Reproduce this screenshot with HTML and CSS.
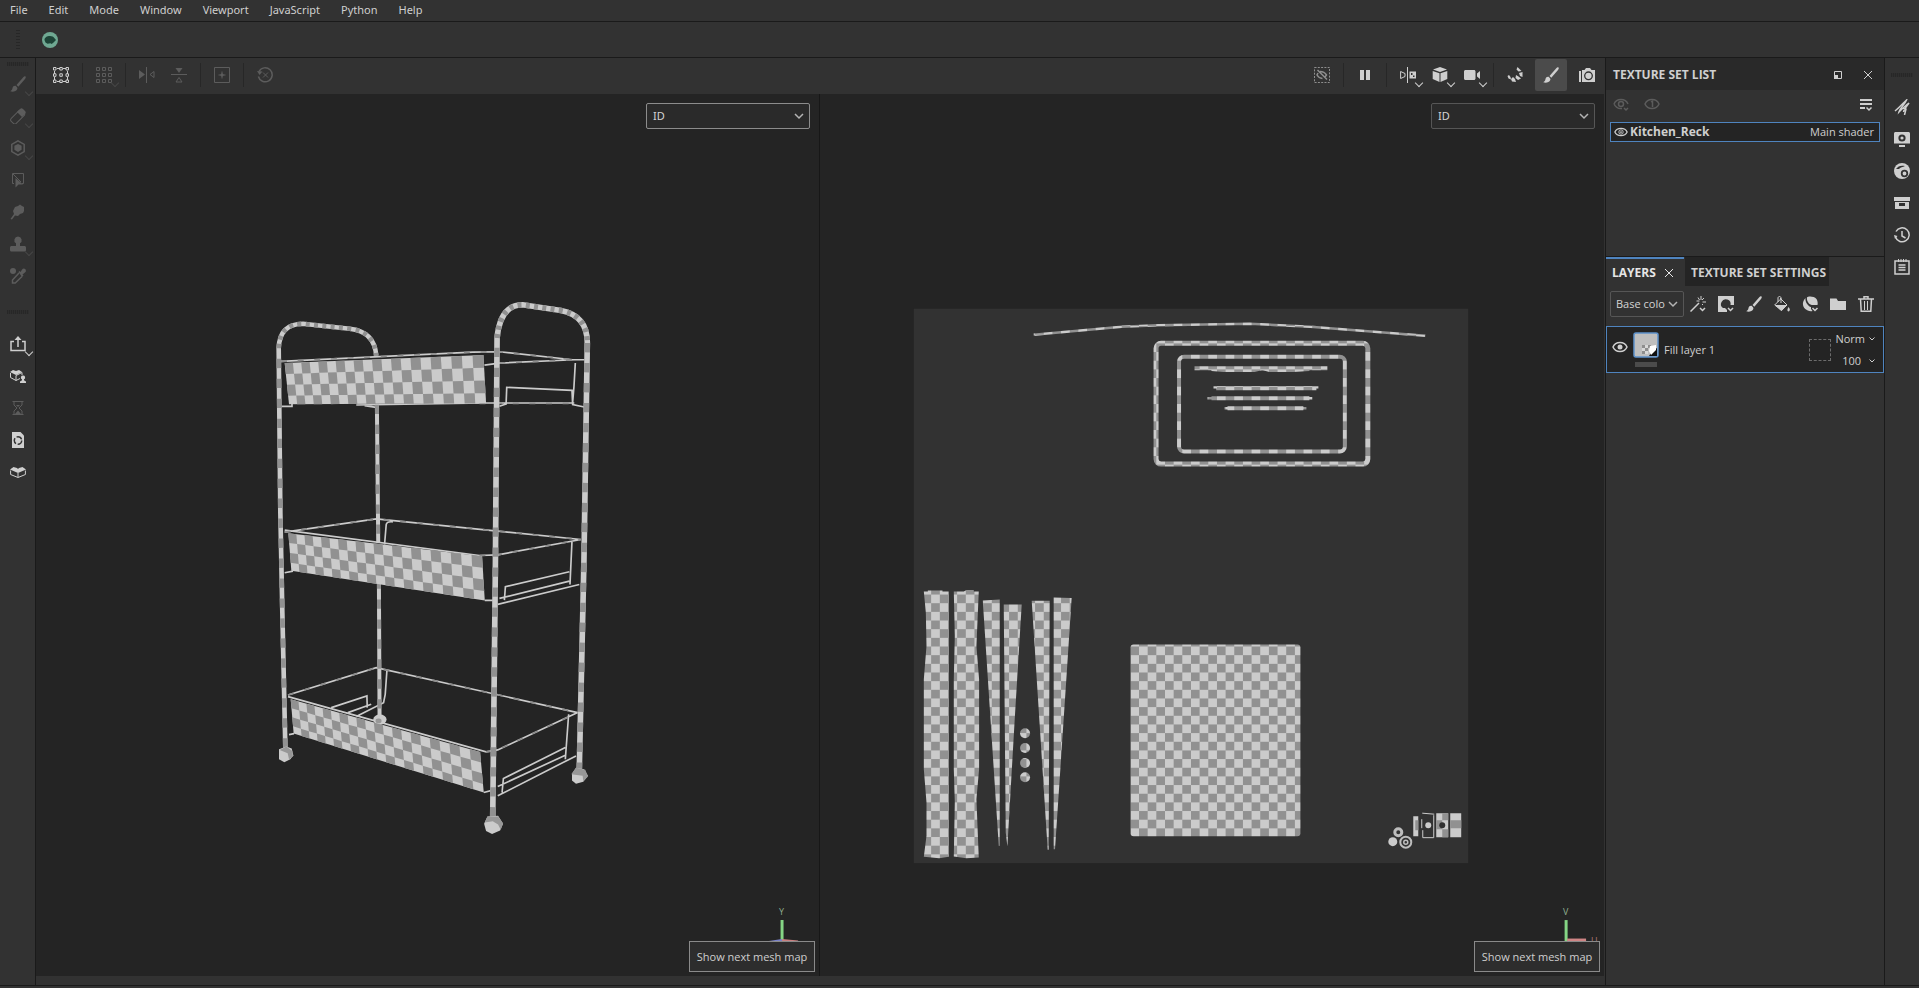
FILE: index.html
```html
<!DOCTYPE html>
<html lang="en">
<head>
  <meta charset="utf-8">
  <title>Painter</title>
  <link rel="stylesheet" href="styles.css">
</head>
<body>
  <nav class="menubar">
    <button>File</button>
    <button>Edit</button>
    <button>Mode</button>
    <button>Window</button>
    <button>Viewport</button>
    <button>JavaScript</button>
    <button>Python</button>
    <button>Help</button>
  </nav>

  <div class="plugin-bar">
    <span class="grip-v"></span>
    <button class="plugin" aria-label="Plugin">
      <svg viewBox="0 0 16 16"><circle cx="8" cy="8" r="8" fill="#6fa892"/><path d="M2.500 8C2.500 5.500 5 4 8 4c2 0 3.500.7 4.500 2.300L14 8l-1.500 1.500L11 11l-1.500 1-1-.8-3 .6L3.500 10.500z" fill="#1d4437"/></svg>
    </button>
  </div>

  <div class="workspace">
    <aside class="tools">
      <span class="grip-h"></span>
      <button class="icon dim more" aria-label="Paint">
        <svg viewBox="0 0 16 16"><path class="f" d="M15.500.5c-.8-.6-1.400-.2-2 .5L6.500 9l1.800 1.800L15 3c.8-1 1-1.900.5-2.500zM5.600 9.800C3.500 9.500 2.600 11 2.400 12.500 2.200 14 1 14.800.3 15.300c2.500.8 6 .2 7-2.300.3-1-.2-1.600-.5-2z"/></svg>
      </button>
      <button class="icon dim more" aria-label="Eraser">
        <svg viewBox="0 0 16 16"><rect class="s" x="-.5" y="5" width="15" height="7" rx="2" transform="rotate(-45 8 8)"/><path class="f" d="M7 4l3-3c1-1 2-1 3 0l2 2c1 1 1 2 0 3l-3 3z"/></svg>
      </button>
      <button class="icon dim more" aria-label="Projection">
        <svg viewBox="0 0 16 16"><path class="s2" d="M8 .8l6.200 3.600v7.200L8 15.200l-6.200-3.600V4.400z"/><path class="f" d="M8 4l3.600 1.800v4L8 12l-3.600-2.200v-4z"/></svg>
      </button>
      <button class="icon dim" aria-label="Polygon fill">
        <svg viewBox="0 0 16 16"><path class="s" d="M4 11.500H2.500v-10h11v10H12M3 2l8 8"/><path class="f" d="M5.500 6v9.500l3-3H13z"/></svg>
      </button>
      <button class="icon dim" aria-label="Smudge">
        <svg viewBox="0 0 16 16"><path class="f" d="M5 3l3-1 2-1.500L12 2l2 1v4l-1 2-3 1-2 2-3-.5L2 15.500.5 15 4 10 3 7z"/></svg>
      </button>
      <button class="icon dim more" aria-label="Clone">
        <svg viewBox="0 0 16 16"><path class="f" d="M8 .5a3.700 3.700 0 0 1 2 6.800V10h4.500c.8 0 1.500.7 1.500 1.500V14c0 .8-.5 1.500-1.500 1.500h-13C.5 15.500 0 14.800 0 14v-2.500C0 10.700.7 10 1.500 10H6V7.300A3.700 3.700 0 0 1 8 .5z"/></svg>
      </button>
      <button class="icon dim" aria-label="Material picker">
        <svg viewBox="0 0 16 16"><circle class="f" cx="3" cy="3" r="3"/><path class="f" d="M8.500 4l1-1 1 1 2-3c1.500-1.500 4.500.5 3 3l-3 2.500 1 1-1.500 1.500z"/><path class="s2" d="M9 5L2.500 12v3h2.700L12 8.500"/></svg>
      </button>
      <span class="grip-h lower"></span>
      <button class="icon more" aria-label="Export">
        <svg viewBox="0 0 16 16"><path class="s2" d="M4 5.500H1v9h14v-9h-3M8 11V3"/><path class="f" d="M8 0l3.500 4h-7z"/></svg>
      </button>
      <button class="icon" aria-label="Asset user">
        <svg viewBox="0 0 16 16"><path class="f" d="M0 4l3-2 3 1 3-1 3 2-6 3z"/><path class="s" d="M.5 5v4.500L6 12.500l4-2M6 7.500v5M6 7.500l6-3V7"/><path class="f" d="M13 7.500a2 2 0 0 1 1 3.800l.2 1.200 1.800 1V15h-6v-1.500l1.800-1 .2-1.200a2 2 0 0 1 1-3.800z"/></svg>
      </button>
      <button class="icon dim" aria-label="Pending">
        <svg viewBox="0 0 16 16"><path class="s" d="M2.500 1.500h11M2.500 14.500h11M4 2v3l3 3-3 3v3M12 2v3L9 8l3 3v3"/><path class="f" d="M6 5h4L8 7zM5 14l3-3.500 3 3.500z"/></svg>
      </button>
      <button class="icon" aria-label="Update resources">
        <svg viewBox="0 0 16 16"><path class="f" d="M2 0h8.500L14 3.500V16H2z"/><circle cx="8" cy="8.500" r="3.700" fill="none" stroke="#323232" stroke-width="1.500" stroke-dasharray="6 1.750"/></svg>
      </button>
      <button class="icon" aria-label="Assets">
        <svg viewBox="0 0 16 16"><path class="f" d="M0 5.500L3.500 3 7 4l1 1 1-1 3.500-1L16 5.500 8 9z"/><path class="s" d="M.6 6.500v4L8 13.500l7.400-3v-4M8 9v4"/></svg>
      </button>
    </aside>

    <main class="stage">
      <div class="viewbar">
        <button class="icon" aria-label="Transform">
          <svg viewBox="0 0 16 16"><path class="s" d="M1.500 4v3M1.500 10v3M14.500 4v3M14.500 10v3M4 1.500h3M10 1.500h3M4 14.500h3M10 14.500h3M.5.5h2.500v2.500H.5zM6.800.5h2.500v2.500H6.800zM13 .5h2.500v2.500H13zM.5 6.800h2.500v2.500H.5zM6.800 6.800h2.500v2.500H6.800zM13 6.800h2.500v2.500H13zM.5 13h2.500v2.500H.5zM6.800 13h2.500v2.500H6.800zM13 13h2.500v2.500H13z"/></svg>
        </button>
        <i class="sep"></i>
        <button class="icon dim more" aria-label="Tiling">
          <svg viewBox="0 0 16 16"><path class="s" d="M.5.5h3v3h-3zM6.500.5h3v3h-3zM12.500.5h3v3h-3zM.5 6.500h3v3h-3zM6.500 6.500h3v3h-3zM12.500 6.500h3v3h-3zM.5 12.500h3v3h-3zM6.500 12.500h3v3h-3zM12.500 12.500h3v3h-3z"/></svg>
        </button>
        <i class="sep"></i>
        <button class="icon dim" aria-label="Flip horizontally">
          <svg viewBox="0 0 16 16"><path class="f" d="M0 3l6 4.500L0 12z"/><path class="s" d="M7.500 0v16M15 4.500v6l-4-3z"/></svg>
        </button>
        <button class="icon dim" aria-label="Flip vertically">
          <svg viewBox="0 0 16 16"><path class="f" d="M4.500 1h7L8 6z"/><path class="s" d="M0 7.500h16M5 15h6l-3-4.500z"/></svg>
        </button>
        <i class="sep"></i>
        <button class="icon dim" aria-label="Center">
          <svg viewBox="0 0 16 16"><path class="s" d="M.5.5h15v15H.5zM8 4.500v7M4.500 8h7"/><path class="f" d="M8 6l2 2-2 2-2-2z"/></svg>
        </button>
        <i class="sep"></i>
        <button class="icon dim" aria-label="Reset">
          <svg viewBox="0 0 16 16"><path class="s2" d="M2 4.500a7 7 0 1 1-.6 5"/><path class="f" d="M0 4l5.500.5-3 3.500z"/><path class="s" d="M6 5.500l5 5M11 5.500l-5 5"/></svg>
        </button>

        <span class="spacer"></span>

        <button class="icon mid" aria-label="Hide selection">
          <svg viewBox="0 0 16 16"><rect class="s" x=".5" y=".5" width="15" height="15" stroke-dasharray="2 1.300"/><path class="s2" d="M3.500 3l9.500 9.500M6 4.500c3 0 5 1 6.500 3.500L11 10M4 6L3 8c1.200 2.200 3 3.300 5.500 3.500"/></svg>
        </button>
        <i class="sep"></i>
        <button class="icon" aria-label="Pause engine">
          <svg viewBox="0 0 16 16"><path class="f" d="M3 3h4v10H3zM9 3h4v10H9z"/></svg>
        </button>
        <i class="sep"></i>
        <button class="icon more" aria-label="Symmetry">
          <svg viewBox="0 0 16 16"><path class="s" d="M7.500 0v16M.6 4.500v7L5 9.500v-3z"/><path class="f" fill-rule="evenodd" d="M9.500 4.500H16v7H9.500zM11 6v2h1.500V6zM13 8.500V10h1.500V8.500z"/></svg>
        </button>
        <button class="icon more" aria-label="Perspective view">
          <svg viewBox="0 0 16 16"><path class="f" d="M8 0l7 2.500L8 5 1 2.500zM.7 4L7.500 6.300V15L.7 12zM15.300 4L8.500 6.300V15l6.800-3z"/></svg>
        </button>
        <button class="icon more" aria-label="Camera">
          <svg viewBox="0 0 16 16"><path class="f" d="M1.500 3H10c.8 0 1.500.7 1.500 1.500v7c0 .8-.7 1.500-1.500 1.500H1.500C.7 13 0 12.300 0 11.500v-7C0 3.700.7 3 1.500 3zM13 6.500L16 4v8l-3-2.500z"/></svg>
        </button>
        <i class="sep"></i>
        <div class="modes">
          <button class="icon" aria-label="Material layers">
            <svg viewBox="0 0 16 16"><path class="f" d="M10.500 0l4 4-3 .5-2-2zM12 6l3.500-1v5l-2.500-1zM9 8l2.500 1.500 2.500 2-3 1.500-2.500-2zM6 10l2 2 1 3-4-.5-1-2.500zM2 8l1.500 2 .5 2.500-2.500-1L.5 9z"/></svg>
          </button>
          <button class="icon active" aria-label="Paint mode">
            <svg viewBox="0 0 16 16"><path class="f" d="M15.500.5c-.8-.6-1.400-.2-2 .5L6.500 9l1.800 1.800L15 3c.8-1 1-1.900.5-2.500zM5.600 9.800C3.500 9.500 2.600 11 2.400 12.500 2.200 14 1 14.800.3 15.300c2.500.8 6 .2 7-2.300.3-1-.2-1.600-.5-2z"/></svg>
          </button>
          <button class="icon" aria-label="Render">
            <svg viewBox="0 0 16 16"><path class="f" d="M0 4h2v11H0zM3 3h2.500L7 1h4l1.500 2H16v12H3z"/><circle cx="9.500" cy="8.800" r="3.800" fill="none" stroke="#323232" stroke-width="1.300"/></svg>
          </button>
        </div>
      </div>

      <div class="viewports">
        <section class="viewport">
          <svg class="scene" viewBox="36 94 784 883">
            <g transform="translate(260 280) scale(.333333)">
              <g class="wire">
                <path d="M64 245L640 217L720 216L940 240H975M675 256L720 250L945 240M948 250L944 320L940 368M740 375L742 323L938 332L940 375L975 382M290 376L680 370L945 370M66 380H97V372M315 378L355 384M720 380L740 373"/>
                <path d="M75 758L350 718L965 780M75 752L660 828L715 826L965 780M375 795L380 735Q382 725 400 727M938 785L932 915M735 962L738 922L930 877M720 957L930 905M715 975L960 915M676 963H700M75 880L100 875"/>
                <path d="M85 1247L350 1165L955 1300M85 1252L680 1418L715 1412L955 1300M215 1285L322 1250L323 1285M265 1300L335 1275M290 1312L372 1270L377 1245L382 1175M928 1305L918 1440M728 1540L732 1498L918 1405M715 1522L918 1428M715 1550L950 1430M88 1366L103 1363M673 1540L700 1533"/>
              </g>
              <g class="wire-dark">
                <path d="M64 245L640 217L720 216L940 240M720 250L945 240M660 371H945M75 758L350 718L965 780M660 828L715 826L965 780M85 1247L350 1165L955 1300M680 1418L715 1412L955 1300"/>
              </g>
              <g class="pole">
                <path stroke-width="12" d="M352 375L356 790M358 900L360 1315"/>
                <path class="band" stroke-width="12" d="M352 375L356 790M358 900L360 1315"/>
              </g>
              <g class="wheel"><ellipse cx="361" cy="1321" rx="20" ry="15"/><ellipse class="shade" cx="357" cy="1325" rx="9" ry="7"/></g>
              <g id="panels"></g>
              <g class="pole">
                <path stroke-width="14" d="M77 1405L68 1000L62 700L57 205Q60 132 130 132L270 147Q345 155 350 228"/>
                <path class="band" stroke-width="14" d="M77 1405L68 1000L62 700L57 205"/>
                <path class="band fine" stroke-width="14" d="M57 205Q60 132 130 132L270 147Q345 155 350 228"/>
                <path stroke-width="17" d="M700 1612L708 850L713 175Q722 75 790 75L905 92Q985 108 984 190L974 840L960 1470"/>
                <path class="band" stroke-width="17" d="M700 1612L708 850L713 175M984 190L974 840L960 1470"/>
                <path class="band fine" stroke-width="17" d="M713 175Q722 75 790 75L905 92Q985 108 984 190"/>
              </g>
              <g class="wheel">
                <path d="M58 1410L80 1402 96 1408 101 1428 92 1440 74 1449 58 1440z"/><path class="shade" d="M60 1412L80 1402 98 1415 100 1432 88 1440 84 1422z"/>
                <path d="M938 1484L950 1466 974 1470 986 1490 972 1508 950 1514 938 1504z"/><path class="shade" d="M936 1485L950 1466 978 1472 986 1492 972 1506 970 1490z"/>
                <path d="M674 1634L684 1612 716 1610 731 1634 722 1654 698 1665 680 1656z"/><path class="shade" d="M676 1630L684 1612 716 1612 731 1632 724 1652 716 1636 700 1626z"/>
              </g>
            </g>
            <g class="axis">
              <path stroke="#85d585" stroke-width="3" d="M783 921v20"/>
              <path stroke="#7b83c9" stroke-width="2" d="M783 941l-13 2"/>
              <path stroke="#c98080" stroke-width="2" d="M783 941l16 1.500"/>
              <text x="780" y="916">Y</text>
            </g>
          </svg>
          <select class="map-select focused" aria-label="3D view channel"><option>ID</option></select>
          <button class="next-map">Show next mesh map</button>
        </section>

        <section class="viewport">
          <svg class="scene" viewBox="821 94 783 883">
            <defs>
              <pattern id="checker" x="914" y="309" width="17.340" height="17.340" patternUnits="userSpaceOnUse">
                <rect width="18" height="18" fill="#cbcbcb"/>
                <path d="M0 0h8.670v8.670H0zM8.670 8.670h8.670v8.670H8.670z" fill="#919191"/>
              </pattern>
              <mask id="islands" maskUnits="userSpaceOnUse" x="914" y="309" width="555" height="555">
                <g fill="#fff" transform="translate(900 570) scale(.333333)">
                  <path d="M72 66H84V63H128V66H147V863L118 867 72 863 80 800V700L72 600V330L80 230 78 130z"/>
                  <path d="M162 66H192L200 62H222V66H237L230 230 238 330V600L230 690 237 865 200 867 162 862 165 700 162 600V330L165 200z"/>
                  <path d="M249 93L300 90V830H297zM312 105H366L345 450 326 780 323 832 318 790zM396 94H450L447 842H444zM462 84L516 86 500 330 466 840H462z"/>
                  <circle cx="376" cy="492" r="15"/><circle cx="376" cy="536" r="15"/><circle cx="376" cy="581" r="15"/><circle cx="376" cy="624" r="15"/>
                  <rect x="693" y="225" width="510" height="576" rx="9"/>
                </g>
                <g fill="none" stroke="#fff">
                  <path stroke-width="2.500" d="M1034 335L1122 327 1159 325.500 1250 324 1311 327 1426 336"/>
                  <rect stroke-width="5" x="1156.500" y="343.500" width="212" height="121" rx="5"/>
                  <rect stroke-width="4" x="1179.500" y="357" width="166" height="95" rx="5"/>
                  <path stroke-width="4" d="M1195 368.500H1328M1217 388.500H1317M1212 398.500H1310M1228 408.500H1304"/>
                  <path stroke-width="2.500" d="M1212 370L1224 371H1255L1263 369 1270 371H1294L1310 370M1214 387.500H1319M1208 398.500H1313M1225 408.500H1307"/>
                </g>
              </mask>
            </defs>
            <rect x="914" y="309" width="555" height="555" fill="#323232"/>
            <rect x="914" y="309" width="555" height="555" fill="url(#checker)" mask="url(#islands)"/>
            <!-- caster and bracket islands -->
            <g fill="#cbcbcb">
              <path d="M1414 817h5v20h-5zM1437 814h12v24h-12zM1451 814h11v24h-11z"/>
              <path fill="#919191" d="M1416 821h3v10h-3zM1443 814h6v7h-6zM1437 821h6v9h-6zM1443 830h6v8h-6zM1451 821h11v8h-11z"/>
              <circle cx="1443" cy="826" r="3" fill="#323232"/>
              <path fill="none" stroke="#cbcbcb" d="M1423 814l12 1M1422.500 820v9M1423.500 831v7.500h11V816"/>
              <circle cx="1429" cy="826" r="3"/>
              <circle cx="1399" cy="833" r="3.500" fill="none" stroke="#bdbdbd" stroke-width="3"/>
              <circle cx="1393.500" cy="842.500" r="4.500"/>
              <circle cx="1406.500" cy="843" r="5.500" fill="none" stroke="#bdbdbd" stroke-width="2"/>
              <circle cx="1406.500" cy="843" r="2" fill="none" stroke="#bdbdbd" stroke-width="1.500"/>
            </g>
            <g class="axis">
              <path stroke="#85d585" stroke-width="3" d="M1567 921v22"/>
              <path stroke="#cf8585" stroke-width="3" d="M1568 941h19"/>
              <text x="1564" y="916">V</text>
              <text x="1592" y="945" class="u">U</text>
            </g>
          </svg>
          <select class="map-select" aria-label="2D view channel"><option>ID</option></select>
          <button class="next-map">Show next mesh map</button>
        </section>
      </div>
    </main>

    <aside class="panels">
      <section class="set-list">
        <header class="panel-title">
          <h2>TEXTURE SET LIST</h2>
          <button class="mini" aria-label="Undock"><svg viewBox="0 0 10 10"><path class="s" d="M1.500 1.500h7v7h-7z"/><path class="f" d="M1 5h4v4H1z"/></svg></button>
          <button class="mini" aria-label="Close"><svg viewBox="0 0 10 10"><path class="s" d="M1 1l8 8M9 1L1 9"/></svg></button>
        </header>
        <div class="set-tools">
          <button class="icon dim" aria-label="Show all"><svg viewBox="0 0 16 16"><path class="s2" d="M1 8c2.500-6 11.500-6 14 0M1 8c1.500 3 4 5 8 4.500M11 12l2 2 2-2"/><circle class="s2" cx="8" cy="8" r="2.500"/></svg></button>
          <button class="icon dim" aria-label="Solo"><svg viewBox="0 0 16 16"><path class="s2" d="M1 8c2.500-6 11.500-6 14 0-2.500 6-11.500 6-14 0zM7 6l1.500-1v6"/></svg></button>
          <span class="spacer"></span>
          <button class="icon" aria-label="List options"><svg viewBox="0 0 16 16"><path class="f" d="M2 3h12v2H2zM2 7h12v2H2zM2 11h5v2H2z"/><path class="s2" d="M8.500 11.500l2.500 2.500 2.500-2.500"/></svg></button>
        </div>
        <div class="set-row">
          <svg viewBox="0 0 16 16"><path class="s2" d="M1 8c2.500-5.500 11.500-5.500 14 0-2.500 5.500-11.500 5.500-14 0z"/><circle class="s" cx="8" cy="8" r="2.500"/><circle class="f" cx="8" cy="8" r="1"/></svg>
          <strong>Kitchen_Reck</strong>
          <span>Main shader</span>
        </div>
      </section>

      <section class="layers">
        <div class="tabs">
          <div class="tab current"><button>LAYERS</button><button class="mini" aria-label="Close layers"><svg viewBox="0 0 10 10"><path class="s" d="M1 1l8 8M9 1L1 9"/></svg></button></div>
          <div class="tab"><button>TEXTURE SET SETTINGS</button></div>
        </div>
        <div class="layer-tools">
          <select class="channel" aria-label="Channel"><option>Base colo</option></select>
          <button class="icon" aria-label="Add effect"><svg viewBox="0 0 16 16"><path class="s2" d="M.5 15.500L9 7"/><path class="s" d="M11 0v4M8 1.500l1.500 2.500M6.500 5h3M12 4l2-2M12.500 6H16M12 8l1 1"/><path class="s2" d="M10 12l2.500 2.500L15 12"/></svg></button>
          <button class="icon" aria-label="Add mask"><svg viewBox="0 0 16 16"><path class="f" fill-rule="evenodd" d="M0 0h16v9h-3.500A4.800 4.800 0 1 0 5 12H7v2H0z"/><path class="f" d="M0 12h7l2 2v2H0z"/><path class="s2" d="M10 12l2.500 2.500L15 12"/></svg></button>
          <button class="icon" aria-label="Add paint layer"><svg viewBox="0 0 16 16"><path class="f" d="M15.500.5c-.8-.6-1.400-.2-2 .5L6.500 9l1.800 1.800L15 3c.8-1 1-1.900.5-2.500zM5.600 9.800C3.500 9.500 2.600 11 2.400 12.500 2.200 14 1 14.800.3 15.300c2.500.8 6 .2 7-2.300.3-1-.2-1.600-.5-2z"/></svg></button>
          <button class="icon" aria-label="Add fill layer"><svg viewBox="0 0 16 16"><path class="s" d="M6 2l7 7-5.500 5.500L.7 9 7 2.700M4 6V2c0-2 3-2 3 0v5"/><path class="f" d="M1 9h12l-5.500 6zM14.500 11c2 2.500 1.500 4 0 4.500-1.500-.5-1.500-2 0-4.500z"/></svg></button>
          <button class="icon" aria-label="Add smart material"><svg viewBox="0 0 16 16"><path class="f" d="M5 1.500C6 0 12 0 14.500 3c1 1.500 1.500 4 1 6H10C7 8.500 4.500 5 5 1.500zM3.500 2C3 6 6 10 9 11v2l1.500 2C4 16.500-3 9 3.500 2z"/><path class="s2" d="M10.500 12l2.500 2.500 2.500-2.500"/></svg></button>
          <button class="icon" aria-label="Add folder"><svg viewBox="0 0 16 16"><path class="f" d="M0 2.500h6.500L8 5h8v9H0z"/></svg></button>
          <button class="icon" aria-label="Delete layer"><svg viewBox="0 0 16 16"><path class="s2" d="M0 3h16M6 2.500V.7h4v1.800M2.500 3l.7 12.300h9.600L13.500 3"/><path class="s" d="M6.500 5v9M9.500 5v9"/></svg></button>
        </div>
        <div class="layer">
          <button class="icon eye" aria-label="Toggle layer"><svg viewBox="0 0 16 16"><path class="s2" d="M1 8c2.500-6 11.500-6 14 0-2.500 6-11.500 6-14 0z"/><circle class="f" cx="8" cy="8" r="2.500"/></svg></button>
          <div class="thumb-col">
            <svg class="thumb" viewBox="0 0 26 26"><rect x="1" y="1" width="24" height="24" rx="2" fill="#bfbfbf" stroke="#5f93cc" stroke-width="1.500"/><path d="M9 13h3v3H9zM12 16h3v3h-3zM9 19h3v3H9zM15 13h3v3h-3z" fill="#8e8e8e"/><path d="M12 13h3v3h-3zM9 16h3v3H9zM12 19h3v3h-3z" fill="#d8d8d8"/><path d="M24 16v8h-8l3-5z" fill="#111"/><path d="M17 14l6-1v5l-5 5-2-4z" fill="#fff"/></svg>
            <span class="thumb-bar"></span>
          </div>
          <span class="layer-name">Fill layer 1</span>
          <span class="mask-slot"></span>
          <div class="blend">
            <button>Norm<svg viewBox="0 0 8 8"><path class="s" d="M1.500 2.500L4 5l2.500-2.500"/></svg></button>
            <button>100<svg viewBox="0 0 8 8"><path class="s" d="M1.500 2.500L4 5l2.500-2.500"/></svg></button>
          </div>
        </div>
      </section>
    </aside>

    <aside class="dock">
      <span class="grip-h"></span>
      <button class="icon" aria-label="Brush properties"><svg viewBox="0 0 16 16"><path class="s2" d="M1 12C6 8 10 3 12.500 1 11 5 6 9 5 13c4-4 7-7 10-9-2 3-5 6-5.500 9M9 9l3 1-1.500 6"/></svg></button>
      <button class="icon" aria-label="Display settings"><svg viewBox="0 0 16 16"><path class="f" d="M1.500 1h13c.8 0 1.500.7 1.500 1.500v10h-16v-10C0 1.700.7 1 1.500 1zM5 14h6v2H5z"/><circle cx="8" cy="7" r="2.600" fill="none" stroke="#323232" stroke-width="2"/></svg></button>
      <button class="icon" aria-label="Shader settings"><svg viewBox="0 0 16 16"><circle class="f" cx="8" cy="8" r="8"/><path d="M2 6c2-3 5-4 9-3-2 1-5 1.500-6 3z" fill="#323232"/><circle cx="10.500" cy="10.500" r="2.800" fill="none" stroke="#323232" stroke-width="1.800"/></svg></button>
      <button class="icon" aria-label="Shelf"><svg viewBox="0 0 16 16"><path class="f" fill-rule="evenodd" d="M0 2h16v4H0zM1 7h14v7H1zM5 8v3h6V8z"/></svg></button>
      <button class="icon" aria-label="History"><svg viewBox="0 0 16 16"><path class="s2" d="M1.500 10A7 7 0 1 0 2 4.500M8 4v5l3.500 2"/><path class="f" d="M0 8l3.500 1L1 12z"/></svg></button>
      <button class="icon" aria-label="Log"><svg viewBox="0 0 16 16"><path class="s2" d="M1 2h14v13H1zM4.500 6h7M4.500 8.500h7M4.500 11h7"/><path class="s" d="M4.500 0v3M7 0v3M9.500 0v3M12 0v3"/></svg></button>
    </aside>
  </div>
  <footer class="statusbar"></footer>

  <script src="panels.js"></script>
</body>
</html>
```
FILE: styles.css
```css
* {
  box-sizing: border-box;
}
body {
  margin: 0;
  height: 100vh;
  display: flex;
  flex-direction: column;
  overflow: hidden;
  background: #323232;
  color: #cfcfcf;
  font-family: "Open Sans", sans-serif;
  font-size: 11px;
  line-height: 16px;
}
button {
  padding: 0;
  border: none;
  background: none;
  color: inherit;
  font: inherit;
}
svg {
  display: block;
}
.f {
  fill: currentColor;
}
.s,
.s2 {
  fill: none;
  stroke: currentColor;
  stroke-width: 1;
}
.s2 {
  stroke-width: 1.5;
}
.spacer {
  flex: 1;
}

/* top bars */
.menubar {
  display: flex;
  gap: 21px;
  height: 22px;
  padding: 0 10px 2px;
  align-items: center;
  border-bottom: 1px solid #1a1a1a;
  font-family: "Noto Sans", sans-serif;
}
.plugin-bar {
  display: flex;
  align-items: center;
  gap: 22px;
  height: 36px;
  padding-left: 16px;
  border-bottom: 1px solid #1a1a1a;
}
.grip-v {
  width: 4px;
  height: 20px;
  background: repeating-linear-gradient(#272727 0 1px, #323232 1px 3px);
}
.plugin svg {
  width: 16px;
  height: 16px;
}

/* icon buttons */
.icon {
  position: relative;
  display: flex;
  flex: none;
  align-items: center;
  justify-content: center;
  width: 32px;
  height: 32px;
  border-radius: 2px;
}
.icon svg {
  width: 16px;
  height: 16px;
}
.icon.dim {
  color: #5c5c5c;
}
.icon.mid {
  color: #8e8e8e;
}
.icon.active {
  background: #4b4b4b;
}
.icon.more::after {
  content: "";
  position: absolute;
  right: 2px;
  bottom: 5px;
  width: 5px;
  height: 5px;
  border: solid currentColor;
  border-width: 0 1px 1px 0;
  transform: rotate(45deg);
}
.icon.dim.more::after {
  border-color: #464646;
}

.workspace {
  flex: 1;
  min-height: 0;
  display: flex;
}
.tools {
  width: 36px;
  display: flex;
  flex-direction: column;
  align-items: center;
  border-right: 1px solid #1a1a1a;
}
.grip-h {
  flex: none;
  width: 22px;
  height: 4px;
  margin: 4px 0 2px;
  background: repeating-linear-gradient(90deg, #272727 0 1px, #2e2e2e 1px 2px);
}
.grip-h.lower {
  margin: 18px 0 14px;
}

/* center */
.stage {
  flex: 1;
  min-width: 0;
  display: flex;
  flex-direction: column;
  padding-right: 1px;
}
.viewbar {
  display: flex;
  align-items: center;
  height: 36px;
  padding: 0 1px 2px 9px;
}
.sep {
  width: 1px;
  height: 24px;
  margin: 0 5px;
  background: #272727;
}
.modes {
  display: flex;
  gap: 4px;
}
.viewports {
  flex: 1;
  min-height: 0;
  display: grid;
  grid-template-columns: 1fr 1fr;
  margin-bottom: 9px;
}
.viewport {
  position: relative;
  min-height: 0;
  background: #242424;
}
.viewport:first-child {
  border-right: 1px solid #171717;
}
.scene {
  width: 100%;
  height: 100%;
}
select {
  appearance: none;
  border: 1px solid #565656;
  border-radius: 2px;
  color: #d4d4d4;
  font: inherit;
  background: #2a2a2a url("data:image/svg+xml,<svg xmlns='http://www.w3.org/2000/svg' viewBox='0 0 10 10'><path d='M1 3l4 4 4-4' fill='none' stroke='%23b4b4b4' stroke-width='1.5'/></svg>") no-repeat right 5px center / 10px 10px;
}
.map-select {
  position: absolute;
  top: 9px;
  right: 9px;
  width: 164px;
  height: 26px;
  padding: 0 6px;
  font-family: "Noto Sans", sans-serif;
}
.map-select.focused {
  border-color: #8c8c8c;
}
.next-map {
  position: absolute;
  right: 4px;
  bottom: 4px;
  width: 126px;
  height: 31px;
  border: 1px solid #8a8a8a;
  background: #2d2d2d;
}
.wire {
  fill: none;
  stroke: #cbcbcb;
  stroke-width: 5;
}
.wire-dark {
  fill: none;
  stroke: #8c8c8c;
  stroke-width: 5;
  stroke-dasharray: 18 32;
}
.pole {
  fill: none;
  stroke: #cbcbcb;
}
.pole .band {
  stroke: #919191;
  stroke-dasharray: 28 32;
}
.pole .fine {
  stroke-dasharray: 12 13;
}
.wheel {
  fill: #cbcbcb;
}
.wheel .shade {
  fill: #979797;
}
.axis {
  fill: none;
}
.axis text {
  fill: #8fae8f;
  font-size: 9px;
}
.axis .u {
  fill: #b07575;
}

/* right panels */
.panels {
  flex: none;
  width: 280px;
  border: solid #1a1a1a;
  border-width: 0 1px;
}
.set-list {
  height: 199px;
  border-bottom: 1px solid #1a1a1a;
}
.panel-title {
  display: flex;
  align-items: center;
  gap: 20px;
  height: 32px;
  padding: 1px 11px 0 7px;
  background: #292929;
}
.panel-title h2 {
  flex: 1;
  margin: 0;
  font-size: 12px;
}
.mini svg {
  width: 10px;
  height: 10px;
}
.set-tools {
  display: flex;
  height: 32px;
  padding-right: 2px;
}
.set-tools .icon {
  height: 28px;
}
.set-tools .dim {
  margin-right: 1px;
  width: 30px;
}
.set-row {
  display: flex;
  align-items: center;
  height: 20px;
  margin: 0 4px;
  padding: 0 5px 0 3px;
  border: 1px solid #4f84bf;
  background: #242424;
}
.set-row svg {
  width: 14px;
  height: 14px;
}
.set-row strong {
  flex: 1;
  margin-left: 2px;
  font-size: 12px;
}
.tabs {
  display: flex;
  height: 30px;
  gap: 1px;
}
.tab {
  display: flex;
  align-items: center;
  margin-bottom: 1px;
  padding: 3px 3px 0 6px;
  background: #242424;
  font-size: 12px;
  font-weight: bold;
}
.tab.current {
  width: 78px;
  justify-content: space-between;
  padding: 1px 10px 0 6px;
  border-top: 2px solid #4f84bf;
  background: none;
  color: #e6e6e6;
}
.layer-tools {
  display: flex;
  align-items: center;
  height: 34px;
  padding-left: 4px;
}
.channel {
  width: 74px;
  height: 26px;
  padding: 0 16px 0 5px;
  background-color: #323232;
}
.layer-tools .icon {
  width: 28px;
}
.layer {
  display: flex;
  align-items: center;
  height: 47px;
  margin-top: 5px;
  border: 1px solid #4f84bf;
  background: #242424;
}
.eye {
  width: 26px;
  padding-bottom: 6px;
}
.thumb-col {
  display: flex;
  flex-direction: column;
  align-items: center;
  gap: 4px;
}
.thumb {
  width: 26px;
  height: 26px;
}
.thumb-bar {
  width: 22px;
  height: 5px;
  background: #4b4b4b;
}
.layer-name {
  flex: 1;
  margin-left: 5px;
}
.mask-slot {
  width: 22px;
  height: 22px;
  border: 1px dashed #6c6c6c;
}
.blend {
  display: flex;
  flex-direction: column;
  align-items: flex-end;
  gap: 6px;
  width: 52px;
  padding-right: 7px;
}
.blend button {
  display: flex;
  align-items: center;
  gap: 3px;
}
.blend button:last-child {
  gap: 7px;
}
.blend svg {
  width: 8px;
  height: 8px;
}

.dock {
  flex: none;
  width: 34px;
  display: flex;
  flex-direction: column;
  align-items: center;
}
.dock .grip-h {
  margin: 15px 0 14px;
}
.statusbar {
  height: 3px;
  border-top: 1px solid #1a1a1a;
}
```
FILE: panels.js
```js
// checkered front panels of the three trays: corners go clockwise from top left
const trays = [
  [[75, 250], [672, 226], [680, 371], [88, 374]],
  [[86, 761], [668, 830], [676, 963], [95, 874]],
  [[93, 1260], [662, 1418], [673, 1540], [102, 1363]]
];
const cols = 21;
const rows = 3.8;
const group = document.getElementById("panels");

function shape(points, fill) {
  const el = document.createElementNS("http://www.w3.org/2000/svg", "polygon");
  el.setAttribute("points", points.map(p => p.join(",")).join(" "));
  el.setAttribute("fill", fill);
  group.appendChild(el);
}

// near columns are wider than the far ones
function spot([a, b, c, d], u, v) {
  u = u / (u + 1.16 * (1 - u));
  return [0, 1].map(i => {
    const top = a[i] + (b[i] - a[i]) * u;
    const bottom = d[i] + (c[i] - d[i]) * u;
    return +(top + (bottom - top) * v).toFixed(1);
  });
}

trays.forEach((tray, n) => {
  shape(tray, "#cbcbcb");
  for (let r = 0; r < rows; r++) {
    for (let c = 0; c < cols; c++) {
      if ((r + c) % 2) continue;
      const u0 = c / cols, u1 = (c + 1) / cols;
      const v0 = r / rows, v1 = Math.min(1, (r + 1) / rows);
      shape([spot(tray, u0, v0), spot(tray, u1, v0), spot(tray, u1, v1), spot(tray, u0, v1)], "#919191");
    }
  }
});
```
